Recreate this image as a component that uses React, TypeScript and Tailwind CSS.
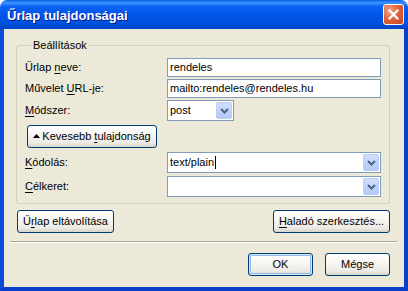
import type { ReactNode } from "react";

function Chevron() {
  return (
    <svg width="9" height="6" viewBox="0 0 9 6" className="block">
      <path d="M1 1 L4.5 4.5 L8 1" fill="none" stroke="#4D6185" strokeWidth="2" />
    </svg>
  );
}

function DropButton() {
  return (
    <div className="m-px w-[16px] self-stretch rounded-[2px] border border-[#BCCDF6] bg-[linear-gradient(180deg,#D2DEFB_0%,#C1D3FB_50%,#B4C8F6_100%)] flex items-center justify-center">
      <Chevron />
    </div>
  );
}

function XpButton({
  children,
  className = "",
  isDefault = false,
}: {
  children: ReactNode;
  className?: string;
  isDefault?: boolean;
}) {
  return (
    <button
      className={`h-[23px] rounded-[3px] border border-[#003C74] bg-[linear-gradient(180deg,#FFFFFF_0%,#F7F6F2_40%,#ECEBE6_80%,#D8D3C8_100%)] flex items-center justify-center text-[11px] text-black ${
        isDefault ? "shadow-[inset_0_0_0_1px_#CEE7FF,inset_0_0_0_2px_#98B8EA]" : ""
      } ${className}`}
    >
      {children}
    </button>
  );
}

function Row({ label, children }: { label: ReactNode; children: ReactNode }) {
  return (
    <div className="flex items-center">
      <div className="w-[142px]">{label}</div>
      {children}
    </div>
  );
}

export default function App() {
  return (
    <div className="w-[408px] h-[291px] flex flex-col font-['Liberation_Sans',Arial,sans-serif] text-[11px] leading-[13px] text-black">
      {/* title bar */}
      <div className="h-[29px] rounded-t-[7px] bg-[linear-gradient(180deg,#0A5FE8_0%,#3D95FF_10%,#0A62F2_22%,#0055EA_50%,#0052E0_80%,#0043C4_100%)] flex items-center pl-[7px] pr-[4px] pt-[2px]">
        <span className="flex-1 text-[13px] font-bold text-white [text-shadow:1px_1px_0_#0A1883] leading-[16px]">
          Űrlap tulajdonságai
        </span>
        <div className="w-[21px] h-[21px] -mt-[2px] rounded-[3px] border border-white bg-[radial-gradient(circle_at_30%_30%,#F0A68C_0%,#E2643C_45%,#C8401C_100%)] flex items-center justify-center">
          <svg width="11" height="11" viewBox="0 0 11 11">
            <path d="M1.5 1.5 L9.5 9.5 M9.5 1.5 L1.5 9.5" stroke="white" strokeWidth="2.2" strokeLinecap="square" />
          </svg>
        </div>
      </div>

      {/* body */}
      <div className="flex-1 flex flex-col border-l-4 border-r-4 border-b-4 border-l-[#0A4BDC] border-r-[#0A3FCC] border-b-[#0A3FCC] bg-[#ECE9D8]">
        <fieldset className="ml-[12px] mt-[10px] w-[374px] rounded-[3px] border border-[#D0D0BF] pl-[8px] pr-[8px] pt-[6px] pb-[6px]">
          <legend className="ml-[6px] px-[2px] leading-[13px]">Beállítások</legend>
          <div className="flex flex-col">
            <Row
              label={
                <span>
                  Űrlap <u className="underline-offset-[2px]">n</u>eve:
                </span>
              }
            >
              <div className="w-[214px] h-[19px] border border-[#7F9DB9] bg-white px-[2px] flex items-center">
                rendeles
              </div>
            </Row>
            <div className="mt-[2px]">
              <Row
                label={
                  <span>
                    Művelet <u className="underline-offset-[2px]">U</u>RL-je:
                  </span>
                }
              >
                <div className="w-[214px] h-[19px] border border-[#7F9DB9] bg-white px-[2px] flex items-center">
                  mailto:rendeles@rendeles.hu
                </div>
              </Row>
            </div>
            <div className="mt-[2px]">
              <Row
                label={
                  <span>
                    <u className="underline-offset-[2px]">M</u>ódszer:
                  </span>
                }
              >
                <div className="w-[67px] h-[21px] border border-[#7F9DB9] bg-white flex">
                  <span className="flex-1 pl-[2px] flex items-center">post</span>
                  <DropButton />
                </div>
              </Row>
            </div>
            <div className="mt-[4px] pl-[2px]">
              <XpButton className="w-[130px] gap-[2px]">
                <svg width="7" height="4" viewBox="0 0 7 4" className="mb-[1px]">
                  <path d="M0 4 L3.5 0 L7 4 Z" fill="black" />
                </svg>
                <span>
                  Kevesebb <u className="underline-offset-[2px]">t</u>ulajdonság
                </span>
              </XpButton>
            </div>
            <div className="mt-[4px]">
              <Row
                label={
                  <span>
                    <u className="underline-offset-[2px]">K</u>ódolás:
                  </span>
                }
              >
                <div className="w-[214px] h-[21px] border border-[#7F9DB9] bg-white flex">
                  <span className="flex-1 pl-[2px] flex items-center">
                    text/plain
                    <span className="ml-px w-px h-[13px] bg-black" />
                  </span>
                  <DropButton />
                </div>
              </Row>
            </div>
            <div className="mt-[3px]">
              <Row
                label={
                  <span>
                    <u className="underline-offset-[2px]">C</u>élkeret:
                  </span>
                }
              >
                <div className="w-[214px] h-[21px] border border-[#7F9DB9] bg-white flex">
                  <span className="flex-1" />
                  <DropButton />
                </div>
              </Row>
            </div>
          </div>
        </fieldset>

        <div className="mt-[6px] ml-[13px] mr-[14px] flex justify-between">
          <XpButton className="w-[97px]">
            <span>
              Ű<u className="underline-offset-[2px]">r</u>lap eltávolítása
            </span>
          </XpButton>
          <XpButton className="w-[117px]">
            <span>
              <u className="underline-offset-[2px]">H</u>aladó szerkesztés...
            </span>
          </XpButton>
        </div>

        <div className="mt-[8px] ml-[6px] mr-[7px] border-t border-t-[#ACA899] border-b border-b-white" />

        <div className="mt-[10px] mr-[14px] flex justify-end gap-[12px]">
          <XpButton isDefault className="w-[65px]">
            OK
          </XpButton>
          <XpButton className="w-[65px]">Mégse</XpButton>
        </div>
      </div>
    </div>
  );
}
